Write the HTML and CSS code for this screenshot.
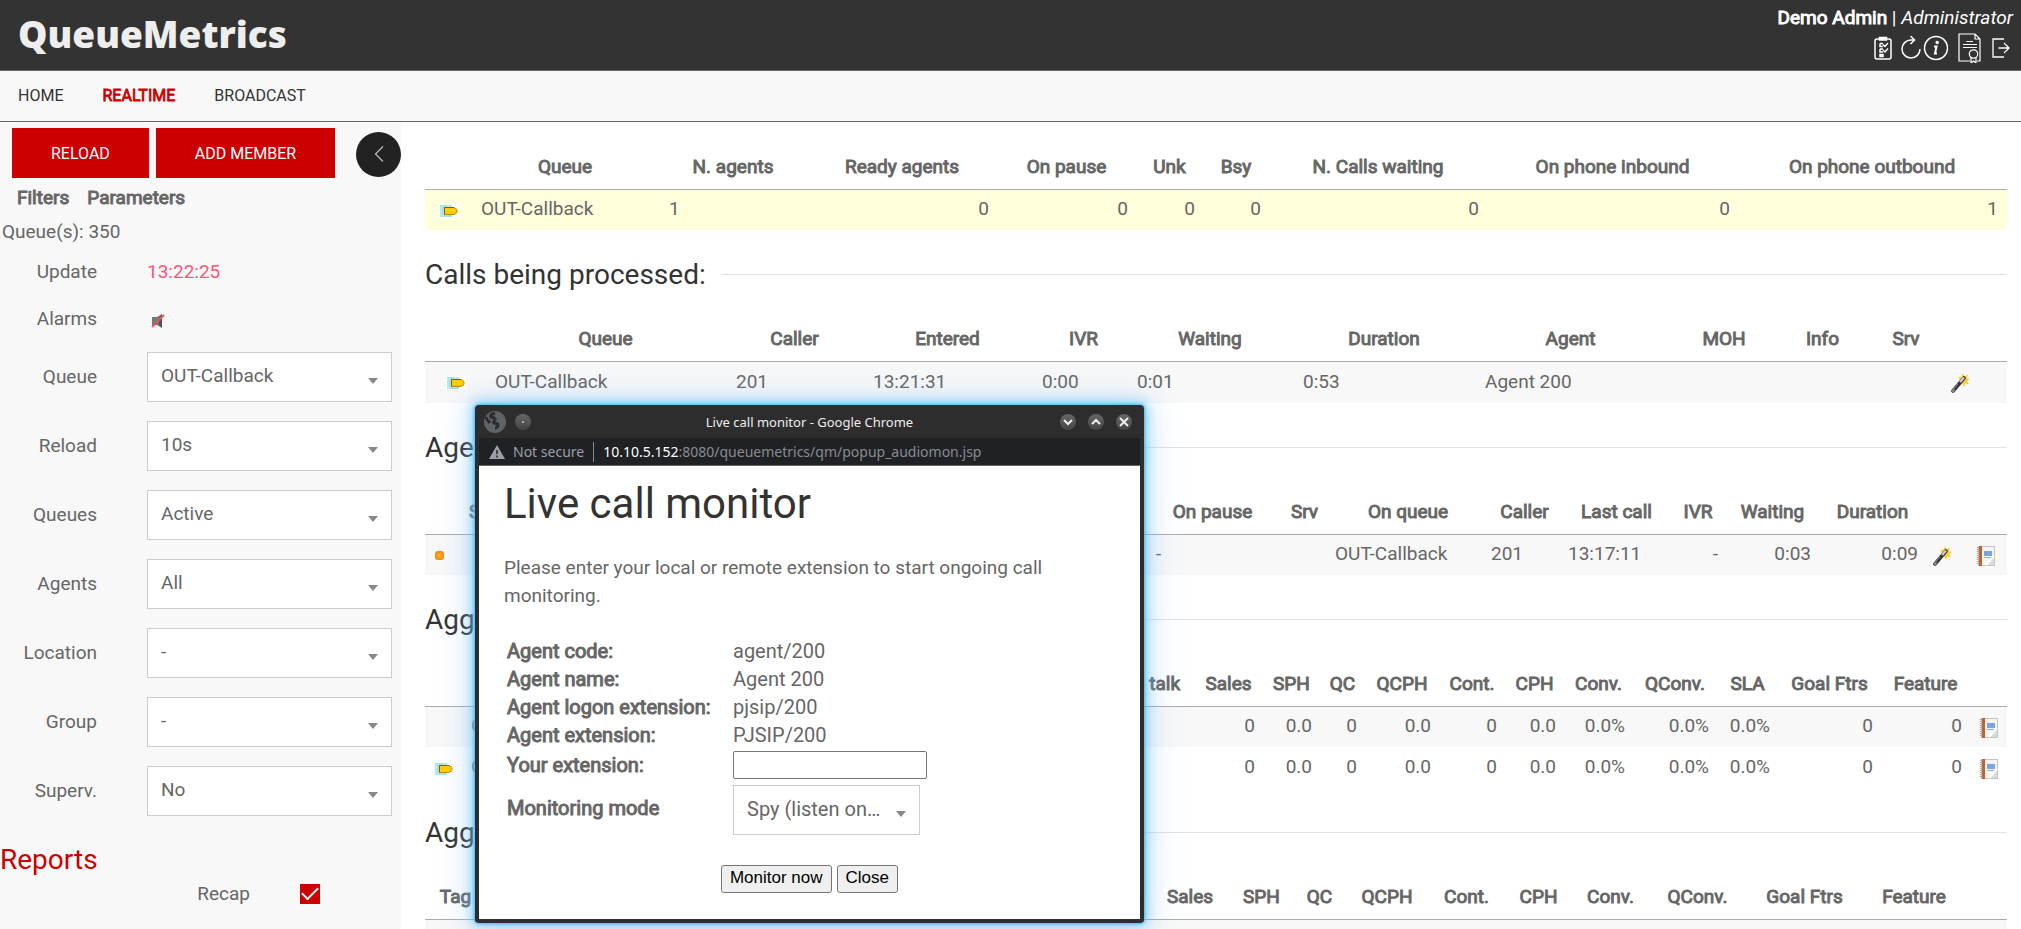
FILE: index.html
```html
<!DOCTYPE html>
<html lang="en">
<head>
<meta charset="utf-8">
<title>QueueMetrics - Realtime</title>
<link rel="stylesheet" href="styles.css">
</head>
<body>
<svg class="sprite" aria-hidden="true">
  <symbol id="tag" viewBox="0 0 20 14">
    <rect x="0" y="0" width="20" height="14" fill="#ffffff"/>
    <rect x="1" y="1" width="12" height="12" fill="#a5e3e3"/>
    <path d="M2 2v10h3M8 2h4" stroke="#c9f2f0" fill="none"/>
    <path d="M5.500 3.500h9.500l3 2v3l-3 2h-9.500z" fill="#fc0" stroke="#c98a00"/>
    <path d="M5.500 10.500v-7h9.500" stroke="#8a5a10" fill="none"/>
  </symbol>
  <symbol id="wand" viewBox="0 0 20 20">
    <path d="M13 0l1.500 3.500L18 1.500l-.8 3.700L20 6l-2.800 2L19 11.500l-3.600-1L14 14l-2-3.500L8 11l2-3.500L8 4l3.500-.2z" fill="#f8cf3c"/>
    <path d="M14 5L3 18" stroke="#333" stroke-width="3.600" stroke-linecap="round"/>
    <path d="M14 4.500L10 9" stroke="#c9c9c9" stroke-width="2.500"/>
    <path d="M8 10.500L3.500 16" stroke="#777" stroke-width="1.200"/>
    <path d="M3 18l.6-.8" stroke="#888" stroke-width="2.600" stroke-linecap="round"/>
  </symbol>
  <symbol id="book" viewBox="0 0 20 20">
    <rect x="2.500" y=".5" width="16" height="19" fill="#f4f4f4" stroke="#c4c4c4"/>
    <path d="M11 19l7-8v8z" fill="#dcdcdc"/><path d="M10 19l8-9" stroke="#fff" stroke-width="2"/>
    <rect x="3" y="0" width="3" height="20" fill="#c4622e"/>
    <path d="M2 1v18" stroke="#a8a8a8" stroke-width="2.500" stroke-dasharray="1 1"/>
    <rect x="8" y="5" width="8" height="5" fill="#7ba3e8"/><path d="M8 11.500h7" stroke="#8fb2ec" stroke-width="1"/>
  </symbol>
</svg>

<header class="top">
  <div class="logo">QueueMetrics</div>
  <div class="account">
    <div class="who"><strong class="b">Demo Admin</strong> | <em>Administrator</em></div>
    <div class="tools">
      <a href="#" aria-label="Tasks"><svg width="18" height="24" viewBox="0 0 18 24" fill="none" stroke="#fff" stroke-width="1.500"><rect x="1" y="3" width="16" height="20" rx="2"/><rect x="5.500" y="1.500" width="7" height="2.500" fill="#fff"/><path d="M6 7.500h3M6 7.500v3h3M6 13v3h3M6 13h3M9 8.500l2 2 3-3.500M9 14l2 2 3-3.500"/><rect x="6" y="18.500" width="3" height="2" fill="#fff"/></svg></a>
      <a href="#" aria-label="Refresh"><svg width="20" height="24" viewBox="0 0 20 24" fill="none" stroke="#fff" stroke-width="1.500"><path d="M19 13a9 9 0 1 1-9-9h3M9.500 0l4 4-4 4"/></svg></a>
      <a href="#" aria-label="Information"><svg width="26" height="26" viewBox="0 0 26 26" fill="none" stroke="#fff" stroke-width="1.500"><circle cx="13" cy="13" r="11.500"/><circle cx="14.200" cy="7.500" r="1" fill="#fff"/><path d="M11 11.500h2.500L12 18.500h2" stroke-width="2"/></svg></a>
      <a href="#" aria-label="License"><svg width="24" height="30" viewBox="0 0 24 30" fill="none" stroke="#fff" stroke-width="1.200"><path d="M12 28H1V1h16l5 5v22h-3M17 1v5h5M8.500 8.500H15M5 11.500h14M5 14.500h14"/><circle cx="15.500" cy="21" r="4.200"/><path d="M13 24.500V30l2.500-2 2.500 2v-5.500"/></svg></a>
      <a href="#" aria-label="Log out"><svg width="20" height="22" viewBox="0 0 20 22" fill="none" stroke="#fff" stroke-width="1.300"><path d="M13 2H2v18h11M7.500 11H18M13 6l5 5-5 5"/></svg></a>
    </div>
  </div>
</header>

<nav class="menu">
  <a href="#">HOME</a>
  <a href="#" class="b active">REALTIME</a>
  <a href="#">BROADCAST</a>
</nav>

<div class="page">
  <aside class="side">
    <div class="actions">
      <button class="red" type="button">RELOAD</button>
      <button class="red" type="button">ADD MEMBER</button>
      <button class="fold" type="button" aria-label="Collapse"><svg width="10" height="18" viewBox="0 0 10 18" fill="none" stroke="#bbb" stroke-width="1.200"><path d="M9 1.500L1.500 9 9 16.500"/></svg></button>
    </div>
    <div class="tabs"><a href="#" class="b">Filters</a><a href="#" class="b">Parameters</a></div>
    <div class="count">Queue(s): 350</div>
    <div class="row update"><span class="name">Update</span><span class="time">13:22:25</span></div>
    <div class="row alarms"><span class="name">Alarms</span><svg width="14" height="16" viewBox="0 0 14 16"><path d="M1 4h5l5-3v14l-5-3H1z" fill="#777"/><path d="M8 5l3-4v14l-3-3z" fill="#555"/><path d="M1 14L13 2" stroke="#e85858" stroke-width="2"/></svg></div>
    <div class="filters">
      <div class="row"><label class="name" for="f1">Queue</label><span class="pick"><select id="f1"><option>OUT-Callback</option></select></span></div>
      <div class="row"><label class="name" for="f2">Reload</label><span class="pick"><select id="f2"><option>10s</option></select></span></div>
      <div class="row"><label class="name" for="f3">Queues</label><span class="pick"><select id="f3"><option>Active</option></select></span></div>
      <div class="row"><label class="name" for="f4">Agents</label><span class="pick"><select id="f4"><option>All</option></select></span></div>
      <div class="row"><label class="name" for="f5">Location</label><span class="pick"><select id="f5"><option>-</option></select></span></div>
      <div class="row"><label class="name" for="f6">Group</label><span class="pick"><select id="f6"><option>-</option></select></span></div>
      <div class="row"><label class="name" for="f7">Superv.</label><span class="pick"><select id="f7"><option>No</option></select></span></div>
    </div>
    <h2 class="reports">Reports</h2>
    <div class="check"><label for="c1">Recap</label><input id="c1" type="checkbox" checked></div>
    <div class="check"><input id="c2" type="checkbox" aria-label="Calls" checked></div>
  </aside>

  <main class="main">
    <table class="grid recap">
      <colgroup><col><col><col><col><col><col><col><col><col><col></colgroup>
      <thead><tr><th></th><th>Queue</th><th>N. agents</th><th>Ready agents</th><th>On pause</th><th>Unk</th><th>Bsy</th><th>N. Calls waiting</th><th>On phone inbound</th><th>On phone outbound</th></tr></thead>
      <tbody><tr class="lit"><td class="icon"><svg width="20" height="14"><use href="#tag"/></svg></td><td>OUT-Callback</td><td>1</td><td class="num">0</td><td class="num">0</td><td class="num">0</td><td class="num">0</td><td class="num">0</td><td class="num">0</td><td class="num">1</td></tr></tbody>
    </table>

    <h2 class="title">Calls being processed:</h2>
    <table class="grid calls">
      <colgroup><col><col><col><col><col><col><col><col><col><col><col><col></colgroup>
      <thead><tr><th></th><th>Queue</th><th>Caller</th><th>Entered</th><th class="inset">IVR</th><th>Waiting</th><th>Duration</th><th>Agent</th><th>MOH</th><th>Info</th><th>Srv</th><th></th></tr></thead>
      <tbody><tr><td class="icon"><svg width="20" height="14"><use href="#tag"/></svg></td><td>OUT-Callback</td><td>201</td><td>13:21:31</td><td>0:00</td><td>0:01</td><td>0:53</td><td>Agent 200</td><td></td><td></td><td></td><td class="icon start"><svg width="20" height="20"><use href="#wand"/></svg></td></tr></tbody>
    </table>

    <h2 class="title">Agents:</h2>
    <table class="grid agents">
      <colgroup><col><col><col><col><col><col><col><col><col><col><col><col></colgroup>
      <thead><tr><th></th><th class="left">Srv</th><th>On pause</th><th>Srv</th><th>On queue</th><th>Caller</th><th>Last call</th><th>IVR</th><th>Waiting</th><th>Duration</th><th></th><th></th></tr></thead>
      <tbody><tr><td class="icon"><span class="dot"></span></td><td></td><td>-</td><td></td><td class="close">OUT-Callback</td><td class="close">201</td><td class="close">13:17:11</td><td class="num">-</td><td class="num">0:03</td><td class="num">0:09</td><td class="icon"><svg width="20" height="20"><use href="#wand"/></svg></td><td class="icon far"><svg width="20" height="20"><use href="#book"/></svg></td></tr></tbody>
    </table>

    <h2 class="title">Aggregate:</h2>
    <table class="grid totals">
      <colgroup><col><col><col><col><col><col><col><col><col><col><col><col><col><col><col></colgroup>
      <thead><tr><th></th><th></th><th>Avg talk</th><th>Sales</th><th>SPH</th><th>QC</th><th>QCPH</th><th>Cont.</th><th>CPH</th><th>Conv.</th><th>QConv.</th><th>SLA</th><th>Goal Ftrs</th><th>Feature</th><th></th></tr></thead>
      <tbody>
        <tr><td></td><td>OUT-Callback</td><td></td><td class="num">0</td><td class="num">0.0</td><td class="num">0</td><td class="num">0.0</td><td class="num">0</td><td class="num">0.0</td><td class="num">0.0%</td><td class="num">0.0%</td><td class="num">0.0%</td><td class="num">0</td><td class="num">0</td><td class="icon"><svg width="20" height="20"><use href="#book"/></svg></td></tr>
        <tr class="plain"><td class="icon"><svg width="20" height="14"><use href="#tag"/></svg></td><td>OUT-Callback</td><td></td><td class="num">0</td><td class="num">0.0</td><td class="num">0</td><td class="num">0.0</td><td class="num">0</td><td class="num">0.0</td><td class="num">0.0%</td><td class="num">0.0%</td><td class="num">0.0%</td><td class="num">0</td><td class="num">0</td><td class="icon"><svg width="20" height="20"><use href="#book"/></svg></td></tr>
      </tbody>
    </table>

    <h2 class="title">Aggregate:</h2>
    <table class="grid tags">
      <colgroup><col><col><col><col><col><col><col><col><col><col><col><col><col></colgroup>
      <thead><tr><th>Tag</th><th></th><th>Sales</th><th>SPH</th><th>QC</th><th>QCPH</th><th>Cont.</th><th>CPH</th><th>Conv.</th><th>QConv.</th><th>Goal Ftrs</th><th>Feature</th><th></th></tr></thead>
      <tbody><tr><td colspan="13"></td></tr></tbody>
    </table>
  </main>
</div>

<section class="window" aria-label="Live call monitor">
  <div class="titlebar">
    <svg width="24" height="24" viewBox="0 0 24 24"><circle cx="12" cy="12" r="11" fill="#5f6368"/><path d="M12 4c-3-1-5 1-4 3 1 1 3 0 4 2s-3 3-1 4 4 0 4 2-2 3-3 3M3 7c1 4 3 4 4 6" fill="none" stroke="#2d2d2d" stroke-width="3"/></svg>
    <button type="button" class="knob menuknob" aria-label="Window menu"><svg width="12" height="12" viewBox="0 0 12 12"><circle cx="6" cy="6" r="1" fill="#ccc"/></svg></button>
    <span class="caption">Live call monitor - Google Chrome</span>
    <button type="button" class="knob" aria-label="Minimize"><svg width="12" height="12" viewBox="0 0 12 12"><path d="M2 4l4 4 4-4"/></svg></button>
    <button type="button" class="knob" aria-label="Maximize"><svg width="12" height="12" viewBox="0 0 12 12"><path d="M2 8l4-4 4 4"/></svg></button>
    <button type="button" class="knob" aria-label="Close window"><svg width="12" height="12" viewBox="0 0 12 12"><path d="M2 2l8 8M10 2l-8 8"/></svg></button>
  </div>
  <div class="address">
    <svg width="16" height="14" viewBox="0 0 16 14"><path d="M8 0l8 14H0z" fill="#9aa0a6"/><path d="M8 5v4M8 10.500v2" stroke="#202124" stroke-width="1.500"/></svg>
    <span class="insecure">Not secure</span>
    <span class="url"><span class="host">10.10.5.152</span>:8080/queuemetrics/qm/popup_audiomon.jsp</span>
  </div>
  <form class="monitor">
    <h1>Live call monitor</h1>
    <p>Please enter your local or remote extension to start ongoing call monitoring.</p>
    <div class="fields">
      <span class="b">Agent code:</span><span>agent/200</span>
      <span class="b">Agent name:</span><span>Agent 200</span>
      <span class="b">Agent logon extension:</span><span>pjsip/200</span>
      <span class="b">Agent extension:</span><span>PJSIP/200</span>
      <label class="b" for="ext">Your extension:</label><input id="ext" type="text">
      <label class="b" for="mode">Monitoring mode</label><span class="pick"><select id="mode"><option>Spy (listen only)</option></select></span>
    </div>
    <div class="buttons"><button type="button">Monitor now</button><button type="button">Close</button></div>
  </form>
</section>
</body>
</html>
```
FILE: styles.css
```css
* { box-sizing: border-box; }
html { height: 100%; }
body {
  margin: 0;
  height: 100%;
  overflow: hidden;
  display: flex;
  flex-direction: column;
  font: 19px/24px Roboto, "Liberation Sans", sans-serif;
  color: #666;
  background: #fff;
}
a { color: inherit; text-decoration: none; }
h1, h2, p { margin: 0; font-weight: 400; }
button, select, input { font: inherit; color: inherit; }
svg { display: block; flex: none; }
.sprite { position: absolute; width: 0; height: 0; }
.b, .grid th { font-weight: 400; -webkit-text-stroke: 0.05em currentColor; }

.top {
  flex: none;
  height: 71px;
  background: #333;
  border-bottom: 1px solid #666;
  display: flex;
  justify-content: space-between;
  color: #fff;
}
.logo { padding: 10px 0 0 18px; font: 800 37px/48px "Open Sans", sans-serif; color: #eee; }
.account { padding: 6px 8px 0 0; }
.who { text-align: right; }
.tools { display: flex; justify-content: flex-end; align-items: center; height: 36px; padding-right: 2px; }
.tools a + a { margin-left: 9px; }
.tools a:nth-child(3) { margin-left: 2px; }

.menu {
  flex: none;
  height: 51px;
  background: #f8f8f8;
  border-bottom: 1px solid #666;
  display: flex;
  align-items: center;
  gap: 39px;
  padding: 0 18px;
  font-size: 16px;
  color: #333;
}
.menu .active { color: #c00; }

.page { flex: 1; min-height: 0; display: flex; }
.side { flex: none; width: 401px; background: #f8f8f8; overflow: hidden; }
.actions { display: flex; align-items: center; padding: 6px 0 0 12px; }
.red {
  height: 50px;
  padding: 1px 39px 0;
  margin-right: 7px;
  border: 0;
  background: #c00;
  color: #fff;
  font-size: 16px;
}
.fold {
  width: 45px;
  height: 45px;
  margin: 2px 0 0 auto;
  padding: 0;
  border: 0;
  border-radius: 50%;
  background: #222;
  display: flex;
  align-items: center;
  justify-content: center;
}
.tabs { display: flex; gap: 18px; padding: 8px 17px 0; }
.count { padding: 10px 2px 0; }
.row { display: flex; align-items: center; }
.name { flex: none; width: 97px; margin-right: 50px; text-align: right; }
.update { padding-top: 16px; }
.alarms { padding-top: 23px; }
.alarms svg { margin: 3px 0 0 4px; }
.time { color: #ff5577; }
.filters { display: flex; flex-direction: column; gap: 19px; padding: 21px 9px 0 0; }
.pick { flex: 1; position: relative; display: block; }
.pick::after {
  content: "";
  position: absolute;
  right: 14px;
  top: 26px;
  border: 5px solid transparent;
  border-top: 6px solid #888;
  border-bottom: 0;
  pointer-events: none;
}
.pick select {
  appearance: none;
  display: block;
  width: 100%;
  height: 50px;
  padding: 0 28px 2px 13px;
  border: 1px solid #ccc;
  border-radius: 0;
  background: #fff;
  text-overflow: ellipsis;
}
.reports { width: 97px; padding-top: 34px; text-align: right; font-size: 28px; line-height: 20px; color: #c00; }
.check { display: flex; align-items: center; height: 47px; }
.check label { width: 250px; text-align: right; }
.check input {
  appearance: none;
  width: 20px;
  height: 20px;
  margin: 0 0 0 300px;
  background: #c00;
  display: grid;
  place-items: center;
}
.check label + input { margin-left: 50px; }
.check input::after {
  content: "";
  width: 14px;
  height: 7px;
  border: solid #fff;
  border-width: 0 0 2px 2px;
  transform: translateY(-2px) rotate(-45deg);
}

.main { flex: 1; min-width: 0; overflow: hidden; padding: 21px 14px 0 24px; }
.grid { width: 100%; table-layout: fixed; border-collapse: collapse; }
.grid th { height: 46px; padding: 2px 2px 0 0; border-bottom: 1px solid #aaa; white-space: nowrap; }
.grid td { height: 41px; padding: 0 9px 1px; background: #f8f8f8; white-space: nowrap; }
.grid .lit td { background: #ffffdc; }
.grid .plain td { background: #fff; }
.grid .num { text-align: right; }
.grid .inset { padding-left: 8px; }
.grid .left { text-align: left; }
.grid .close { padding-left: 4px; }
.grid .icon { padding: 2px 0 0; }
.grid .icon > * { margin: 0 auto; }
.grid .start > * { margin: 0; }
.grid .far { padding-left: 9px; }
.calls td { height: 42px; }
.dot { display: block; width: 9px; height: 9px; border-radius: 3px; background: radial-gradient(#ffb428, #f07800); }

.recap col:nth-child(1) { width: 47px; }
.recap col:nth-child(2) { width: 188px; }
.recap col:nth-child(3) { width: 148px; }
.recap col:nth-child(4) { width: 190px; }
.recap col:nth-child(5) { width: 139px; }
.recap col:nth-child(6) { width: 67px; }
.recap col:nth-child(7) { width: 66px; }
.recap col:nth-child(8) { width: 218px; }
.recap col:nth-child(9) { width: 251px; }
.recap col:nth-child(10) { width: 268px; }

.calls col:nth-child(1) { width: 61px; }
.calls col:nth-child(2) { width: 241px; }
.calls col:nth-child(3) { width: 137px; }
.calls col:nth-child(4) { width: 169px; }
.calls col:nth-child(5) { width: 95px; }
.calls col:nth-child(6) { width: 166px; }
.calls col:nth-child(7) { width: 182px; }
.calls col:nth-child(8) { width: 191px; }
.calls col:nth-child(9) { width: 116px; }
.calls col:nth-child(10) { width: 81px; }
.calls col:nth-child(11) { width: 86px; }
.calls col:nth-child(12) { width: 57px; }

.agents col:nth-child(1) { width: 28px; }
.agents col:nth-child(2) { width: 694px; }
.agents col:nth-child(3) { width: 133px; }
.agents col:nth-child(4) { width: 51px; }
.agents col:nth-child(5) { width: 156px; }
.agents col:nth-child(6) { width: 77px; }
.agents col:nth-child(7) { width: 107px; }
.agents col:nth-child(8) { width: 56px; }
.agents col:nth-child(9) { width: 93px; }
.agents col:nth-child(10) { width: 107px; }
.agents col:nth-child(11) { width: 29px; }
.agents col:nth-child(12) { width: 51px; }
.agents .left { padding-left: 16px; }

.totals col:nth-child(1) { width: 37px; }
.totals col:nth-child(2) { width: 638px; }
.totals col:nth-child(3) { width: 95px; }
.totals col:nth-child(4) { width: 69px; }
.totals col:nth-child(5) { width: 57px; }
.totals col:nth-child(6) { width: 45px; }
.totals col:nth-child(7) { width: 74px; }
.totals col:nth-child(8) { width: 66px; }
.totals col:nth-child(9) { width: 59px; }
.totals col:nth-child(10) { width: 69px; }
.totals col:nth-child(11) { width: 84px; }
.totals col:nth-child(12) { width: 61px; }
.totals col:nth-child(13) { width: 103px; }
.totals col:nth-child(14) { width: 89px; }
.totals col:nth-child(15) { width: 36px; }

.tags col:nth-child(1) { width: 63px; }
.tags col:nth-child(2) { width: 663px; }
.tags col:nth-child(3) { width: 80px; }
.tags col:nth-child(4) { width: 63px; }
.tags col:nth-child(5) { width: 53px; }
.tags col:nth-child(6) { width: 82px; }
.tags col:nth-child(7) { width: 77px; }
.tags col:nth-child(8) { width: 67px; }
.tags col:nth-child(9) { width: 77px; }
.tags col:nth-child(10) { width: 97px; }
.tags col:nth-child(11) { width: 117px; }
.tags col:nth-child(12) { width: 102px; }
.tags col:nth-child(13) { width: 41px; }

.title {
  display: flex;
  align-items: center;
  gap: 15px;
  margin: 28px 0 24px;
  font-size: 28px;
  line-height: 33px;
  color: #333;
}
.title::after { content: ""; flex: 1; height: 1px; background: #e2e2e2; }

.window {
  position: absolute;
  left: 475px;
  top: 405px;
  width: 669px;
  border: solid #2d2d2d;
  border-width: 0 4px 4px;
  border-radius: 4px;
  background: #fff;
  box-shadow: 0 0 3px 1px #45b8f5, 0 0 12px 3px rgba(80, 185, 250, 0.6), 0 0 32px 8px rgba(120, 185, 245, 0.3);
}
.titlebar {
  display: flex;
  align-items: center;
  gap: 12px;
  height: 33px;
  padding: 0 8px 0 4px;
  background: #2d2d2d;
  color: #eee;
  font: 13px/20px "Noto Sans", sans-serif;
}
.caption { flex: 1; padding-left: 28px; text-align: center; }
.knob {
  flex: none;
  width: 16px;
  height: 16px;
  padding: 0;
  border: 0;
  border-radius: 50%;
  background: linear-gradient(#666, #444);
  display: flex;
  align-items: center;
  justify-content: center;
}
.menuknob { margin-left: -4px; }
.knob path { fill: none; stroke: #eee; stroke-width: 2; }
.address {
  display: flex;
  align-items: center;
  height: 28px;
  padding: 0 10px;
  background: #202124;
  border-bottom: 1px solid #666;
  color: #888c90;
  font: 14px/20px "Noto Sans", sans-serif;
}
.insecure { margin: 0 9px 0 8px; padding-right: 9px; border-right: 1px solid #888; color: #9aa0a6; }
.host { color: #fff; }
.monitor { padding: 10px 25px 26px; }
.monitor h1 { font-size: 42px; line-height: 56px; color: #333; }
.monitor p { padding: 22px 60px 26px 0; line-height: 28px; }
.fields {
  display: grid;
  grid-template-columns: 223px 187px;
  align-items: center;
  grid-auto-rows: minmax(28px, auto);
  column-gap: 3px;
  padding: 1px 3px 0;
  font-size: 20px;
}
.fields input { width: 194px; height: 28px; margin: 2px 0; border: 1px solid #767676; border-radius: 2px; }
.fields .pick { margin-top: 4px; }
.fields select { padding-right: 36px; }
.buttons { display: flex; justify-content: center; gap: 5px; padding-top: 30px; }
.buttons button {
  height: 28px;
  padding: 0 8px 2px;
  border: 1px solid #767676;
  border-radius: 3px;
  background: #efefef;
  color: #000;
  font: 17px/20px "Liberation Sans", sans-serif;
}
```
